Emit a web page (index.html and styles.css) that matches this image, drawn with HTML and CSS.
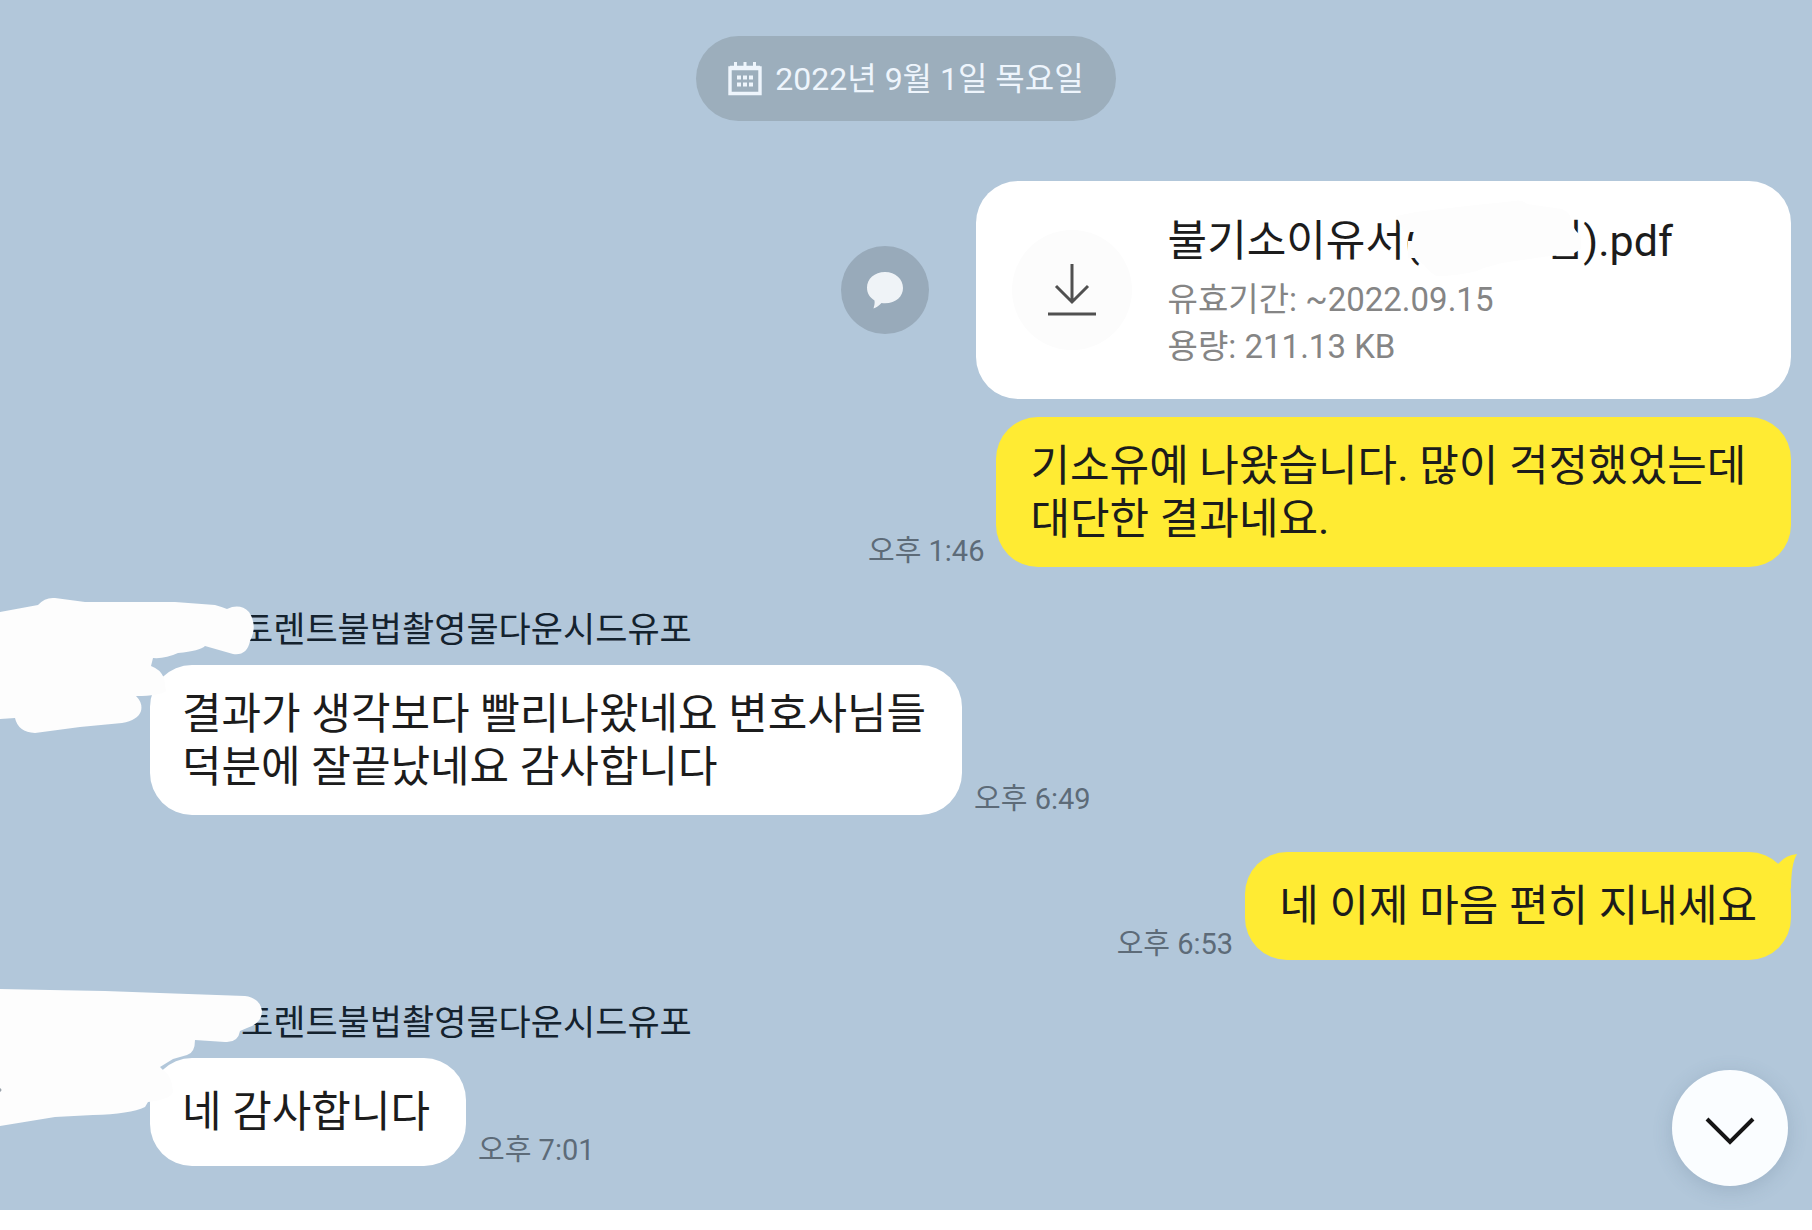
FILE: index.html
```html
<!DOCTYPE html>
<html lang="ko">
<head>
<meta charset="utf-8">
<meta name="viewport" content="width=device-width, initial-scale=1">
<title>채팅</title>
<link rel="stylesheet" href="styles.css">
</head>
<body>
<main class="chat">
  <button class="date" type="button">
    <svg class="date-icon" viewBox="0 0 34 34" aria-hidden="true">
      <path d="M2 6H32V31.500H2Z" fill="none" stroke="currentColor" stroke-width="3.400"/>
      <path d="M2 6H32" stroke="currentColor" stroke-width="4.500"/>
      <path d="M7.500 0V6M17 0V6M26.500 0V6" stroke="currentColor" stroke-width="3"/>
      <path d="M9 15.500H25M9 22.500H25" stroke="currentColor" stroke-width="4" stroke-dasharray="4 2"/>
    </svg>
    <time datetime="2022-09-01">2022년 9월 1일 목요일</time>
  </button>

  <section class="row row-out row-file">
    <button class="share" type="button" aria-label="공유">
      <svg viewBox="0 0 38 38" aria-hidden="true">
        <path d="M19 1C8.500 1 1 8 1 16.500C1 22.500 4 26.500 8.500 29.500C9 32.500 8 35.500 7.500 37.500C11 36.500 13 34.500 15.500 32C29 33.500 37 26 37 17C37 8 29.500 1 19 1Z" fill="currentColor"/>
      </svg>
    </button>
    <article class="file">
      <button class="download" type="button" aria-label="다운로드">
        <svg viewBox="0 0 50 54" aria-hidden="true">
          <path d="M25 1V39M9 23L25 39L41 23M1 51H49" fill="none" stroke="currentColor" stroke-width="3"/>
        </svg>
      </button>
      <div class="file-text">
        <h2 class="file-name">불기소이유서(<span class="blank"></span>님).pdf
          <svg class="file-mask" viewBox="0 0 184 78" aria-hidden="true">
            <path d="M2 17Q24 12 47 10Q90 5 120 2Q128 0 133 5L168 10Q178 14 178 26L182 32L187 37V50L182 53Q178 56 156 57L108 64Q88 69 83 72Q64 77 42 77Q32 70 30 66L22 59H14V42H20L24 33H10Z" fill="#fdfdfd"/>
          </svg>
        </h2>
        <p class="file-meta">유효기간: ~2022.09.15</p>
        <p class="file-meta">용량: 211.13 KB</p>
      </div>
    </article>
  </section>

  <section class="row row-out row-first">
    <time class="time">오후 1:46</time>
    <p class="bubble bubble-out">기소유예 나왔습니다. 많이 걱정했었는데&nbsp;<br>대단한 결과네요.</p>
  </section>

  <section class="incoming">
    <h3 class="name">토렌트불법촬영물다운시드유포</h3>
    <div class="row">
      <p class="bubble">결과가 생각보다 빨리나왔네요 변호사님들<br>덕분에 잘끝났네요 감사합니다</p>
      <time class="time">오후 6:49</time>
    </div>
    <svg class="mask" viewBox="0 596 270 140" aria-hidden="true">
      <path d="M0 611L38 604Q45 596 55 597L85 601L175 601L215 604Q222 606 227 608Q240 602 249 611Q258 625 250 640Q247 655 233 653L205 645Q200 650 178 652Q165 658 153 657L151 665Q160 668 164 677L166 690Q160 695 136 695Q143 702 141 710Q138 719 122 722L80 726L35 732Q18 731 15 717L0 718Z" fill="#fdfdfd"/>
    </svg>
  </section>

  <section class="row row-out row-reply">
    <time class="time">오후 6:53</time>
    <p class="bubble bubble-out bubble-single">네 이제 마음 편히 지내세요
      <svg class="tail" viewBox="0 0 28 36" aria-hidden="true">
        <path d="M0 20L10 10Q17 2 28 1Q22 11 22 36Z" fill="#ffeb33"/>
      </svg>
    </p>
  </section>

  <section class="incoming">
    <h3 class="name">토렌트불법촬영물다운시드유포</h3>
    <div class="row">
      <p class="bubble bubble-single">네 감사합니다</p>
      <time class="time">오후 7:01</time>
    </div>
    <svg class="mask" viewBox="0 989 270 140" aria-hidden="true">
      <path d="M0 988L50 989L105 990L160 992L245 995Q260 997 262 1010Q262 1022 247 1027L240 1030Q238 1042 225 1041L195 1039Q195 1052 187 1054L173 1058L160 1066L163 1069Q172 1075 173 1090Q173 1098 148 1101L145 1106Q130 1113 93 1114L55 1116L0 1125Z" fill="#fdfdfd"/>
      <path d="M0 1087Q3 1089 0 1091Z" fill="#9aa3ab"/>
    </svg>
  </section>

  <button class="down" type="button" aria-label="맨 아래로">
    <svg viewBox="0 0 50 28" aria-hidden="true">
      <path d="M2 2L25 25L48 2" fill="none" stroke="currentColor" stroke-width="4"/>
    </svg>
  </button>
</main>
<footer class="composer"></footer>
</body>
</html>
```
FILE: styles.css
```css
* {
  box-sizing: border-box;
}

body {
  margin: 0;
  min-height: 100vh;
  display: flex;
  flex-direction: column;
  background: #fff;
  color: #1c1c1c;
  font-family: Roboto, "Noto Sans CJK KR", sans-serif;
}

h2,
h3,
p {
  margin: 0;
  font-weight: 400;
}

button {
  display: flex;
  align-items: center;
  justify-content: center;
  padding: 0;
  border: 0;
  font: inherit;
}

svg {
  display: block;
  overflow: visible;
}

.chat {
  position: relative;
  flex: 1;
  display: flex;
  flex-direction: column;
  padding: 36px 0 44px;
  background: #b2c7da;
  overflow: hidden;
}

.composer {
  height: 20px;
  background: #fff;
}

.date {
  align-self: center;
  gap: 13px;
  height: 85px;
  padding: 0 32px;
  border-radius: 43px;
  background: #9caebc;
  color: #eef5fc;
  font-size: 32px;
  line-height: 40px;
}

.date-icon {
  width: 34px;
  height: 34px;
}

.row {
  display: flex;
  align-items: flex-end;
  gap: 12px;
}

.row-out {
  justify-content: flex-end;
  padding-right: 21px;
}

.row-file {
  align-items: center;
  gap: 47px;
  margin-top: 60px;
}

.row-first {
  margin-top: 18px;
}

.row-reply {
  margin-top: 37px;
}

.share {
  width: 88px;
  height: 88px;
  border-radius: 50%;
  background: #98aaba;
  color: #eff3f7;
}

.share svg {
  width: 38px;
  height: 38px;
}

.file {
  display: flex;
  align-items: center;
  gap: 36px;
  width: 45vw;
  height: 218px;
  padding: 0 36px;
  border-radius: 42px;
  background: #fff;
}

.download {
  flex: none;
  width: 120px;
  height: 120px;
  border-radius: 50%;
  background: #fcfcfc;
  color: #505050;
}

.download svg {
  width: 50px;
  height: 54px;
}

.file-text {
  padding-top: 5px;
}

.file-name {
  position: relative;
  margin-bottom: 8px;
  font-size: 43px;
  line-height: 53px;
  white-space: nowrap;
}

.blank {
  display: inline-block;
  width: 124px;
}

.file-mask {
  position: absolute;
  top: -16px;
  left: 226px;
  width: 184px;
  height: 78px;
}

.file-meta {
  color: #858585;
  font-size: 33px;
  line-height: 47px;
}

.bubble {
  position: relative;
  padding: 23px 36px 21px 32px;
  border-radius: 42px;
  background: #fff;
  font-size: 43px;
  line-height: 53px;
}

.bubble-out {
  padding-right: 34px;
  padding-left: 34px;
  background: #ffeb33;
}

.bubble-single {
  padding-top: 28px;
  padding-bottom: 27px;
}

.tail {
  position: absolute;
  top: 1px;
  right: -6px;
  width: 28px;
  height: 36px;
}

.time {
  color: #5d6b78;
  font-size: 29px;
  line-height: 32px;
}

.incoming {
  position: relative;
  margin-top: 44px;
  padding-left: 150px;
}

.name {
  margin-bottom: 14px;
  padding-left: 91px;
  color: #14222e;
  font-size: 35px;
  line-height: 40px;
}

.mask {
  position: absolute;
  top: -14px;
  left: 0;
  width: 270px;
  height: 140px;
}

.down {
  position: absolute;
  right: 24px;
  bottom: 24px;
  width: 116px;
  height: 116px;
  padding-top: 6px;
  border-radius: 50%;
  background: #fafdff;
  color: #151515;
  box-shadow: 0 4px 20px rgba(70, 95, 120, 0.2);
}

.down svg {
  width: 50px;
  height: 28px;
}
```
